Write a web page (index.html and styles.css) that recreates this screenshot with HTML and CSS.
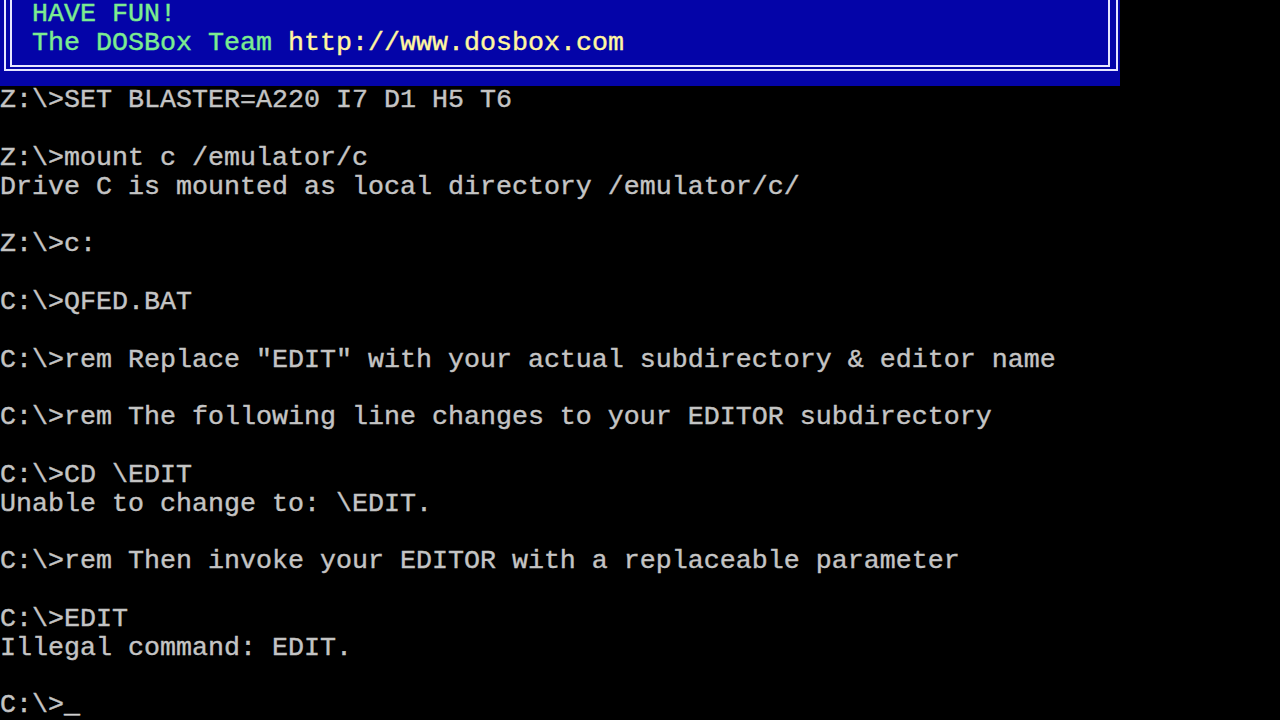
FILE: index.html
```html
<!DOCTYPE html>
<html lang="en">
<head>
  <meta charset="UTF-8">
  <meta name="viewport" content="width=device-width, initial-scale=1.0">
  <title>DOSBox</title>
  <link rel="stylesheet" href="styles.css">
</head>
<body>
  <div class="screen">
    <!-- Welcome box (top scrolled off) -->
    <div class="welcome">
      <div class="frame-outer">
        <div class="frame-inner">
          <div class="line green">HAVE FUN!</div>
          <div class="line"><span class="green">The DOSBox Team </span><span class="yellow">http://www.dosbox.com</span></div>
        </div>
      </div>
    </div>

    <div class="line">Z:\&gt;SET BLASTER=A220 I7 D1 H5 T6</div>
    <div class="line"></div>
    <div class="line">Z:\&gt;mount c /emulator/c</div>
    <div class="line">Drive C is mounted as local directory /emulator/c/</div>
    <div class="line"></div>
    <div class="line">Z:\&gt;c:</div>
    <div class="line"></div>
    <div class="line">C:\&gt;QFED.BAT</div>
    <div class="line"></div>
    <div class="line">C:\&gt;rem Replace "EDIT" with your actual subdirectory &amp; editor name</div>
    <div class="line"></div>
    <div class="line">C:\&gt;rem The following line changes to your EDITOR subdirectory</div>
    <div class="line"></div>
    <div class="line">C:\&gt;CD \EDIT</div>
    <div class="line">Unable to change to: \EDIT.</div>
    <div class="line"></div>
    <div class="line">C:\&gt;rem Then invoke your EDITOR with a replaceable parameter</div>
    <div class="line"></div>
    <div class="line">C:\&gt;EDIT</div>
    <div class="line">Illegal command: EDIT.</div>
    <div class="line"></div>
    <div class="line">C:\&gt;<span class="cursor">_</span></div>
  </div>
</body>
</html>
```

FILE: styles.css
```css
/* Base */
html, body {
  margin: 0;
  padding: 0;
  background-color: #000;
  overflow: hidden;
}
.screen {
  width: 1280px;
  height: 720px;
  color: #c4c4c4;
  font-family: 'Liberation Mono', 'DejaVu Sans Mono', monospace;
  font-size: 26.67px;
  font-weight: normal;
  -webkit-text-stroke: 0.4px currentColor;
}
.line {
  height: 28.8px;
  line-height: 28.8px;
  white-space: pre;
}

/* Welcome box */
.welcome {
  width: 1120px;
  height: 86.4px;
  background-color: #0404a8;
}
.frame-outer {
  margin-left: 4px;
  width: 1110px;
  height: 69px;
  border: 2px solid #e6e6ff;
  border-top: none;
}
.frame-inner {
  margin-left: 4px;
  width: 1076px;
  height: 65px;
  padding-left: 20px;
  border: 2px solid #e6e6ff;
  border-top: none;
}
.green { color: #7cec90; }
.yellow { color: #fff6a0; }
.cursor { color: #d0d0d0; }
```
